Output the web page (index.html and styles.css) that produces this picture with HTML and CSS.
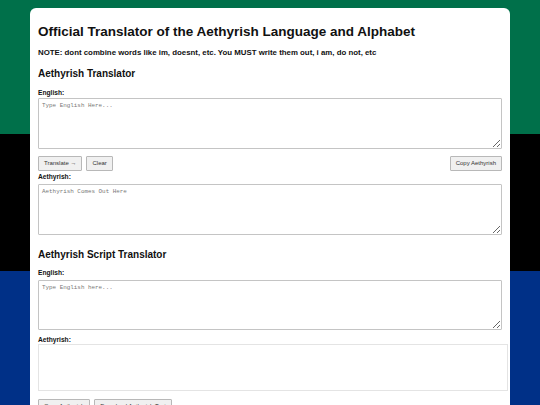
FILE: index.html
```html
<!DOCTYPE html>
<html lang="en">
<head>
<meta charset="utf-8">
<title>Official Translator of the Aethyrish Language and Alphabet</title>
<link rel="stylesheet" href="styles.css">
</head>
<body>
<main class="card">
  <h1 class="title">Official Translator of the Aethyrish Language and Alphabet</h1>
  <p class="note">NOTE: dont combine words like im, doesnt, etc. You MUST write them out, i am, do not, etc</p>

  <section class="block">
    <h2 class="heading">Aethyrish Translator</h2>
    <label class="label label-first" for="en1">English:</label>
    <textarea id="en1" class="field" placeholder="Type English Here..."></textarea>
    <div class="actions">
      <div class="btn-group">
        <button class="btn">Translate &rarr;</button>
        <button class="btn">Clear</button>
      </div>
      <button class="btn">Copy Aethyrish</button>
    </div>
    <label class="label label-after-actions" for="ae1">Aethyrish:</label>
    <textarea id="ae1" class="field" placeholder="Aethyrish Comes Out Here" readonly></textarea>
  </section>

  <section class="block block-second">
    <h2 class="heading">Aethyrish Script Translator</h2>
    <label class="label label-first-2" for="en2">English:</label>
    <textarea id="en2" class="field field-short" placeholder="Type English here..."></textarea>
    <label class="label label-script" for="script-out">Aethyrish:</label>
    <div id="script-out" class="script-output"></div>
    <div class="btn-group bottom-actions">
      <button class="btn">Copy Aethyrish</button>
      <button class="btn">Download Aethyrish Text</button>
    </div>
  </section>
</main>
</body>
</html>
```

FILE: styles.css
```css
html, body {
  margin: 0;
  padding: 0;
}

body {
  font-family: "Liberation Sans", Arial, sans-serif;
  color: #111;
  background: linear-gradient(to bottom,
    #00704a 0%, #00704a 33%,
    #000000 33%, #000000 67%,
    #003087 67%, #003087 100%) fixed;
  min-height: 100vh;
}

.card {
  width: 480px;
  box-sizing: border-box;
  margin: 8px auto 0;
  padding: 16px 8px 20px;
  background: #ffffff;
  border-radius: 6px;
}

.title {
  margin: 0;
  font-size: 13.5px;
  line-height: 16px;
  font-weight: bold;
}

.note {
  margin: 8px 0 0;
  font-size: 7.85px;
  line-height: 10px;
  font-weight: bold;
}

.heading {
  margin: 10px 0 0;
  font-size: 10px;
  line-height: 12px;
  font-weight: bold;
}

.block-second .heading {
  margin-top: 14px;
}

.label {
  display: block;
  font-size: 6.65px;
  line-height: 8px;
  font-weight: bold;
  color: #111;
}

.label-first {
  margin: 9px 0 1px;
}

.label-after-actions {
  margin: 2px 0 3px;
}

.label-first-2 {
  margin: 8px 0 3px;
}

.label-script {
  margin: 6px 0 0;
}

.field {
  display: block;
  width: 100%;
  height: 51px;
  box-sizing: border-box;
  margin: 0;
  padding: 3px;
  border: 1px solid #c4c4c4;
  border-radius: 1px;
  font-family: "Liberation Mono", "DejaVu Sans Mono", monospace;
  font-size: 5.9px;
  line-height: 7px;
  color: #222;
  background: #fff;
  resize: vertical;
}

.field::placeholder {
  color: #777777;
}

.field-short {
  height: 50px;
}

.actions {
  display: flex;
  justify-content: space-between;
  align-items: center;
  margin-top: 7px;
}

.btn-group {
  display: flex;
  gap: 4px;
}

.btn {
  font-family: "Liberation Sans", Arial, sans-serif;
  font-size: 6px;
  line-height: 7px;
  height: 15px;
  box-sizing: border-box;
  padding: 3px 5px;
  margin: 0;
  color: #333;
  background: #f0f0f0;
  border: 1px solid #b8b8b8;
  border-radius: 1px;
}

.script-output {
  box-sizing: content-box;
  width: 100%;
  min-height: 43px;
  padding: 1px 2px;
  border: 1px solid #e4e4e4;
  background: #fff;
}

.bottom-actions {
  margin-top: 8px;
}
```
